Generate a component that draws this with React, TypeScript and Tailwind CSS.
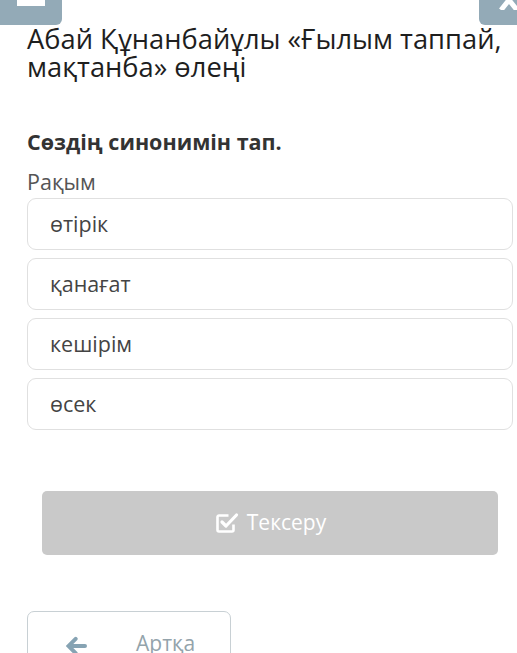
import React from 'react';

const options = ['өтірік', 'қанағат', 'кешірім', 'өсек'];

export default function App() {
  return (
    <div className="relative h-[653px] w-[517px] overflow-hidden bg-white font-['Open_Sans',sans-serif]">
      {/* top corner buttons, cut off by the viewport */}
      <div className="absolute left-0 top-0 h-[25px] w-[62px] rounded-br-md bg-[#93aab7]">
        <div className="absolute left-[17px] top-0 h-[6px] w-[28px] bg-white" />
      </div>
      <div className="absolute right-0 top-0 h-[25px] w-[38px] rounded-bl-md bg-[#93aab7]">
        <svg className="absolute right-[-4px] top-[-8px] h-[18px] w-[24px]" viewBox="0 0 24 18">
          <path d="M4 18 L12 8 L20 18" stroke="white" strokeWidth="5" fill="none" />
        </svg>
      </div>

      <div className="px-[27px] pt-[25px]">
        <h1 className="w-[480px] text-[27.3px] leading-[28px] text-[#1e1e1e]">
          Абай Құнанбайұлы «Ғылым таппай, мақтанба» өлеңі
        </h1>

        <p className="mt-[49px] text-[21.5px] font-bold leading-[24px] text-[#333]">Сөздің синонимін тап.</p>
        <p className="mt-[16px] text-[21.5px] leading-[24px] text-[#555]">Рақым</p>

        <div className="mt-[4px] flex flex-col gap-[8px]">
          {options.map((o) => (
            <div
              key={o}
              className="flex h-[52px] w-[486px] items-center rounded-[9px] border border-[#e0e0e0] px-[22px] text-[21.5px] text-[#444]"
            >
              {o}
            </div>
          ))}
        </div>

        <div className="mt-[61px] px-[15px]">
          <button className="flex h-[64px] w-[456px] items-center justify-center gap-[8px] rounded-[5px] bg-[#c9c9c9] text-[21px] text-white">
            <svg className="h-[24px] w-[25px]" viewBox="0 0 24 24" fill="none" stroke="white" strokeWidth="2.6">
              <path d="M19 13.5V19a1.5 1.5 0 0 1-1.5 1.5h-13A1.5 1.5 0 0 1 3 19V6a1.5 1.5 0 0 1 1.5-1.5H14" strokeLinejoin="round" />
              <path d="M7.5 11l4 4L22 4" strokeWidth="3.2" strokeLinecap="round" strokeLinejoin="round" />
            </svg>
            Тексеру
          </button>
        </div>

        <div className="mt-[56px]">
          <button className="flex h-[60px] w-[204px] items-start rounded-[7px] border border-[#c8d0d4] pt-[17px] text-[21px] text-[#93a3ab]">
            {/* bold left arrow */}
            <svg className="ml-[36px] mt-[7px] h-[20px] w-[23px]" viewBox="0 0 23 20" fill="#86a3b3">
              <path d="M10.5 1.2a2 2 0 0 1 2.8 2.8L9.3 8H21a2 2 0 0 1 0 4H9.3l4 4a2 2 0 0 1-2.8 2.8L2 10.3a1 1 0 0 1 0-.6z" />
            </svg>
            <span className="ml-[49px] leading-[28px]">Артқа</span>
          </button>
        </div>
      </div>
    </div>
  );
}
